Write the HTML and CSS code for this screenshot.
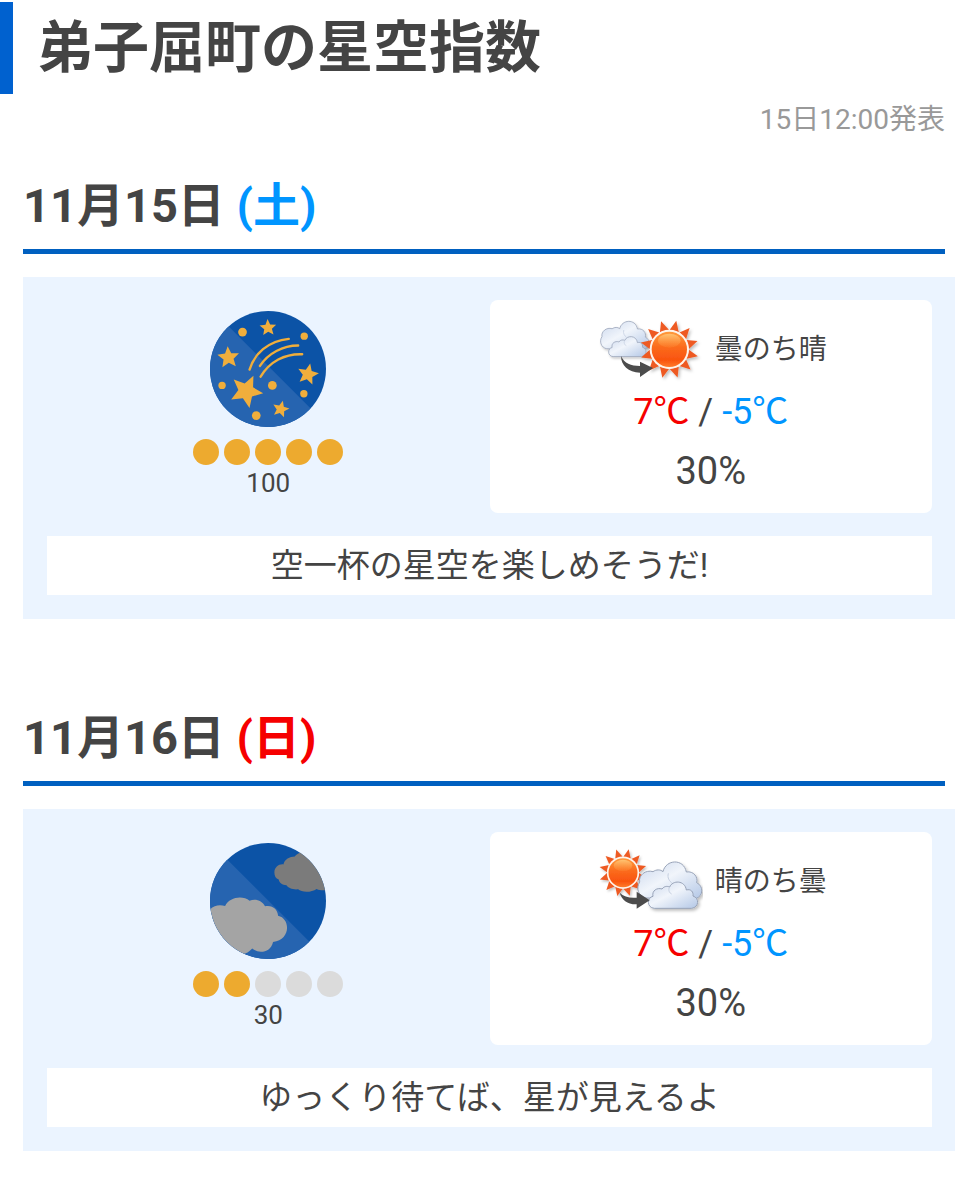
FILE: index.html
```html
<!DOCTYPE html>
<html lang="ja">
<head>
    <meta charset="UTF-8">
    <meta name="viewport" content="width=device-width, initial-scale=1.0">
    <title>弟子屈町の星空指数</title>
    <link rel="stylesheet" href="styles.css">
</head>
<body>
    <!-- Shared icon parts -->
    <svg class="defs" width="0" height="0" aria-hidden="true">
        <defs>
            <linearGradient id="sun-fill" x1="0" y1="0" x2="0" y2="1">
                <stop offset="0" stop-color="#ff9a3c"/>
                <stop offset="0.45" stop-color="#fb6a1c"/>
                <stop offset="0.8" stop-color="#f9540f"/>
                <stop offset="1" stop-color="#ff7a2a"/>
            </linearGradient>
            <linearGradient id="sun-shine" x1="0" y1="0" x2="0" y2="1">
                <stop offset="0" stop-color="#ffc878" stop-opacity="0.9"/>
                <stop offset="1" stop-color="#ff9640" stop-opacity="0.2"/>
            </linearGradient>
            <linearGradient id="cloud-fill" x1="0" y1="0" x2="1" y2="1">
                <stop offset="0" stop-color="#c9d6ec"/>
                <stop offset="0.45" stop-color="#f1f5fb"/>
                <stop offset="1" stop-color="#b3c7e6"/>
            </linearGradient>
            <filter id="shadow" x="-20%" y="-20%" width="150%" height="150%">
                <feDropShadow dx="5" dy="6" stdDeviation="4" flood-color="#000" flood-opacity="0.25"/>
            </filter>
            <polygon id="star" points="0,-10 2.7,-3.7 9.5,-3.1 4.4,1.4 5.9,8.1 0,4.6 -5.9,8.1 -4.4,1.4 -9.5,-3.1 -2.7,-3.7"/>
            <path id="ray" d="M-14 -57 L-2 -88 L14 -57 Z"/>
            <g id="sun">
                <g fill="#ee5a24">
                    <use href="#ray" transform="rotate(15)"/>
                    <use href="#ray" transform="rotate(45)"/>
                    <use href="#ray" transform="rotate(75)"/>
                    <use href="#ray" transform="rotate(105)"/>
                    <use href="#ray" transform="rotate(135)"/>
                    <use href="#ray" transform="rotate(165)"/>
                    <use href="#ray" transform="rotate(195)"/>
                    <use href="#ray" transform="rotate(225)"/>
                    <use href="#ray" transform="rotate(255)"/>
                    <use href="#ray" transform="rotate(285)"/>
                    <use href="#ray" transform="rotate(315)"/>
                    <use href="#ray" transform="rotate(345)"/>
                </g>
                <circle r="59" fill="#fff4ea"/>
                <circle r="53" fill="url(#sun-fill)"/>
                <ellipse cy="-26" rx="34" ry="21" fill="url(#sun-shine)"/>
            </g>
            <g id="clouds" fill="url(#cloud-fill)" stroke="#98a3b8" stroke-width="3">
                <path d="M165 174 C142 170 134 144 146 126 C142 106 164 88 186 95 C196 88 208 88 216 95 C224 58 278 54 286 96 C308 92 322 112 317 128 C338 138 338 168 314 176 Z"/>
                <path d="M190 205 C166 203 168 172 186 169 C182 152 198 142 213 147 C220 138 228 138 236 141 C244 120 282 120 286 150 C300 146 308 156 306 168 C326 174 324 202 302 205 Z"/>
                <path d="M232 100 C228 114 236 124 242 128 M236 141 C230 150 236 160 242 162" fill="none" stroke="#c5cfe0"/>
            </g>
        </defs>
    </svg>

    <h1 class="page-title">弟子屈町の星空指数</h1>
    <p class="announce">15日12:00発表</p>

    <section class="day">
        <h2 class="date">11月15日 <span class="sat">(土)</span></h2>
        <div class="card">
            <div class="row">
                <div class="index">
                    <svg class="index-icon" viewBox="92 49 346 346" role="img" aria-label="満天の星">
                        <clipPath id="round-1"><circle cx="265" cy="222" r="173"/></clipPath>
                        <g clip-path="url(#round-1)">
                            <rect x="92" y="49" width="346" height="346" fill="#0c53a6"/>
                            <path d="M92 39 L448 395 H92 Z" fill="#2664b0"/>
                        </g>
                        <g fill="#f0ae3c">
                            <use href="#star" transform="translate(265 99) rotate(-3) scale(2.6)"/>
                            <use href="#star" transform="translate(147 188) rotate(-4) scale(3.4)"/>
                            <use href="#star" transform="translate(200 288) rotate(25) scale(5.1)"/>
                            <use href="#star" transform="translate(384 238) rotate(12) scale(3.3)"/>
                            <use href="#star" transform="translate(303 342) rotate(14) scale(2.6)"/>
                            <circle cx="189" cy="112" r="13"/>
                            <circle cx="373" cy="124" r="11"/>
                            <circle cx="128" cy="271" r="11"/>
                            <circle cx="278" cy="271" r="13"/>
                            <circle cx="372" cy="296" r="11"/>
                            <circle cx="230" cy="361" r="13"/>
                        </g>
                        <path d="M210 224 C224 178 264 138 327 132 M241 213 C265 175 310 152 355 152 M243 245 C270 200 315 176 367 178" fill="none" stroke="#f0ae3c" stroke-width="7" stroke-linecap="round"/>
                    </svg>
                    <div class="dots">
                        <span class="dot on"></span>
                        <span class="dot on"></span>
                        <span class="dot on"></span>
                        <span class="dot on"></span>
                        <span class="dot on"></span>
                    </div>
                    <p class="score">100</p>
                </div>
                <div class="forecast">
                    <div class="weather">
                        <svg class="weather-icon" viewBox="12 12 324 207" aria-hidden="true">
                            <use href="#clouds" transform="translate(-78 -16) scale(0.76)" filter="url(#shadow)"/>
                            <use href="#sun" transform="translate(235 118)" filter="url(#shadow)"/>
                            <path d="M90 138 C100 160 120 168 147 168 V155 L186 174 L147 201 V188 C112 187 90 166 90 138 Z" fill="#4c4c4c"/>
                        </svg>
                        <span class="weather-name">曇のち晴</span>
                    </div>
                    <p class="temp"><span class="high">7℃</span> / <span class="low">-5℃</span></p>
                    <p class="rain">30%</p>
                </div>
            </div>
            <p class="comment">空一杯の星空を楽しめそうだ!</p>
        </div>
    </section>

    <section class="day">
        <h2 class="date">11月16日 <span class="sun">(日)</span></h2>
        <div class="card">
            <div class="row">
                <div class="index">
                    <svg class="index-icon" viewBox="92 40 346 346" role="img" aria-label="雲の多い空">
                        <clipPath id="round-2"><circle cx="265" cy="213" r="173"/></clipPath>
                        <g clip-path="url(#round-2)">
                            <rect x="92" y="40" width="346" height="346" fill="#0c53a6"/>
                            <path d="M92 38 L440 386 H92 Z" fill="#2664b0"/>
                            <path d="M284 128 C284 112 298 102 311 104 C314 88 330 80 345 80 C360 60 420 56 445 90 V180 C430 182 420 182 410 177 C395 188 365 188 355 178 C340 180 325 174 320 166 C308 166 298 158 297 149 C288 146 284 138 284 128 Z" fill="#7b7b7b"/>
                            <path d="M80 400 V260 C90 228 115 222 137 228 C150 200 190 195 210 212 C230 205 248 213 256 229 C278 224 294 238 295 257 C333 265 333 330 280 335 C274 366 238 372 218 355 C208 366 200 370 190 371 L160 400 Z" fill="#a4a4a4"/>
                        </g>
                    </svg>
                    <div class="dots">
                        <span class="dot on"></span>
                        <span class="dot on"></span>
                        <span class="dot"></span>
                        <span class="dot"></span>
                        <span class="dot"></span>
                    </div>
                    <p class="score">30</p>
                </div>
                <div class="forecast">
                    <div class="weather">
                        <svg class="weather-icon" viewBox="12 18 324 207" aria-hidden="true">
                            <use href="#sun" transform="translate(96 98) scale(0.82)" filter="url(#shadow)"/>
                            <use href="#clouds" filter="url(#shadow)"/>
                            <path d="M86 158 C98 170 116 175 137 173 V155 L176 181 L137 206 V193 C110 194 92 180 86 158 Z" fill="#4c4c4c"/>
                        </svg>
                        <span class="weather-name">晴のち曇</span>
                    </div>
                    <p class="temp"><span class="high">7℃</span> / <span class="low">-5℃</span></p>
                    <p class="rain">30%</p>
                </div>
            </div>
            <p class="comment">ゆっくり待てば、星が見えるよ</p>
        </div>
    </section>
</body>
</html>
```

FILE: styles.css
```css
body {
    font-family: Roboto, "Noto Sans CJK JP", sans-serif;
    color: #444;
    background-color: #fff;
    margin: 0;
    padding: 2px 0 48px;
}

h1, h2, p {
    margin: 0;
}

.defs {
    position: absolute;
}

.page-title {
    border-left: 13px solid #0061cf;
    padding-left: 24px;
    font-size: 56px;
    line-height: 92px;
    font-weight: bold;
}

.announce {
    padding: 0 24px;
    font-size: 28px;
    line-height: 52px;
    color: #999;
    text-align: right;
}

.day {
    padding: 16px 24px 0 23px;
    margin-bottom: 59px;
}

.day:last-child {
    margin-bottom: 0;
}

.date {
    border-bottom: 5px solid #0060c0;
    font-size: 47px;
    line-height: 87px;
    font-weight: bold;
}

.sat, .low {
    color: #0095ff;
}

.sun, .high {
    color: #f60000;
}

.card {
    margin: 23px -10px 0 0;
    padding: 23px 23px 24px 24px;
    background-color: #ebf4ff;
}

.row {
    display: flex;
}

.index, .forecast {
    flex: 1;
    text-align: center;
}

.index-icon {
    display: block;
    width: 116px;
    height: 116px;
    margin: 11px auto 12px;
}

.dots {
    display: flex;
    justify-content: center;
    gap: 5px;
}

.dot {
    width: 26px;
    height: 26px;
    border-radius: 50%;
    background-color: #dbdbdb;
}

.dot.on {
    background-color: #edaa2f;
}

.score {
    font-size: 26px;
    line-height: 36px;
}

.forecast {
    padding: 14px 0 12px;
    border-radius: 8px;
    background-color: #fff;
}

.weather {
    display: flex;
    align-items: center;
    justify-content: center;
    gap: 12px;
    font-size: 28px;
}

.weather-icon {
    width: 108px;
    height: 69px;
}

.weather-name {
    padding-bottom: 4px;
}

.temp {
    font-size: 36px;
    line-height: 59px;
}

.rain {
    font-size: 38px;
    line-height: 59px;
}

.comment {
    margin-top: 23px;
    background-color: #fff;
    font-size: 33px;
    line-height: 59px;
    text-align: center;
}
```
